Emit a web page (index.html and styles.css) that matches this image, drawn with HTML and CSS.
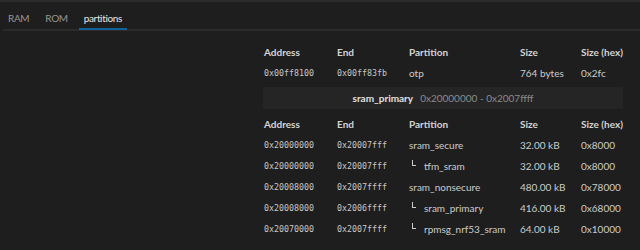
FILE: index.html
```html
<!DOCTYPE html>
<html>
<head>
<meta charset="utf-8">
<link rel="stylesheet" href="styles.css">
</head>
<body>
<div class="app">
  <nav class="tabs">
    <span class="tab">RAM</span>
    <span class="tab">ROM</span>
    <span class="tab active">partitions</span>
  </nav>
  <main class="content">
    <section class="tables">
      <table class="ptable">
        <colgroup><col class="c1"><col class="c2"><col class="c3"><col class="c4"><col class="c5"></colgroup>
        <thead><tr><th>Address</th><th>End</th><th>Partition</th><th>Size</th><th>Size (hex)</th></tr></thead>
        <tbody>
          <tr><td class="mono">0x00ff8100</td><td class="mono">0x00ff83fb</td><td>otp</td><td>764 bytes</td><td>0x2fc</td></tr>
        </tbody>
      </table>
      <div class="banner"><span class="bname">sram_primary</span><span class="brange">0x20000000 - 0x2007ffff</span></div>
      <table class="ptable">
        <colgroup><col class="c1"><col class="c2"><col class="c3"><col class="c4"><col class="c5"></colgroup>
        <thead><tr><th>Address</th><th>End</th><th>Partition</th><th>Size</th><th>Size (hex)</th></tr></thead>
        <tbody>
          <tr><td class="mono">0x20000000</td><td class="mono">0x20007fff</td><td>sram_secure</td><td>32.00 kB</td><td>0x8000</td></tr>
          <tr><td class="mono">0x20000000</td><td class="mono">0x20007fff</td><td><span class="child"><span class="corner"></span>tfm_sram</span></td><td>32.00 kB</td><td>0x8000</td></tr>
          <tr><td class="mono">0x20008000</td><td class="mono">0x2007ffff</td><td>sram_nonsecure</td><td>480.00 kB</td><td>0x78000</td></tr>
          <tr><td class="mono">0x20008000</td><td class="mono">0x2006ffff</td><td><span class="child"><span class="corner"></span>sram_primary</span></td><td>416.00 kB</td><td>0x68000</td></tr>
          <tr><td class="mono">0x20070000</td><td class="mono">0x2007ffff</td><td><span class="child"><span class="corner"></span>rpmsg_nrf53_sram</span></td><td>64.00 kB</td><td>0x10000</td></tr>
        </tbody>
      </table>
    </section>
  </main>
</div>
</body>
</html>
```
FILE: styles.css
```css
html, body {
  margin: 0;
  padding: 0;
  background: #1e1e1e;
  height: 100%;
}
body {
  font-family: Lato, "Open Sans", sans-serif;
  font-size: 10px;
  color: #cccccc;
  overflow: hidden;
}
.app {
  border-top: 2px solid #2b2b2b;
  height: 248px;
  display: flex;
  flex-direction: column;
}
.tabs {
  display: flex;
  gap: 6px;
  margin-left: 3px;
  height: 27px;
  border-bottom: 2px solid #2b2b2b;
}
.tab {
  padding: 0 5px;
  height: 28px;
  line-height: 33px;
  color: #969696;
  font-size: 10px;
  letter-spacing: -0.35px;
  box-sizing: border-box;
}
.tab.active {
  color: #e7e7e7;
  border-bottom: 2px solid #0e639c;
}
.content {
  display: flex;
  justify-content: flex-end;
  padding: 10px 17px 0 0;
}
.tables {
  width: 360px;
  display: flex;
  flex-direction: column;
}
.ptable {
  border-collapse: collapse;
  table-layout: fixed;
  width: 360px;
}
.c1 { width: 73px; }
.c2 { width: 72px; }
.c3 { width: 111px; }
.c4 { width: 61px; }
.c5 { width: 43px; }
.ptable th, .ptable td {
  padding: 0 0 0 1px;
  height: 21px;
  text-align: left;
  white-space: nowrap;
  vertical-align: middle;
}
.ptable th {
  font-weight: 700;
  color: #d4d4d4;
}
.mono {
  font-family: "DejaVu Sans Mono", "Liberation Mono", monospace;
  font-size: 8.3px;
  color: #c8c8c8;
}
.child {
  display: inline-flex;
  align-items: center;
  padding-left: 3px;
}
.corner {
  display: inline-block;
  width: 3px;
  height: 5px;
  border-left: 1px solid #cccccc;
  border-bottom: 1px solid #cccccc;
  margin-right: 8px;
  position: relative;
  top: -3px;
}
.banner {
  margin: 4px 0;
  height: 22px;
  background: #252526;
  display: flex;
  justify-content: center;
  align-items: center;
  gap: 7px;
}
.bname {
  font-weight: 700;
  color: #e0e0e0;
}
.brange {
  color: #8b8b8b;
}
```
